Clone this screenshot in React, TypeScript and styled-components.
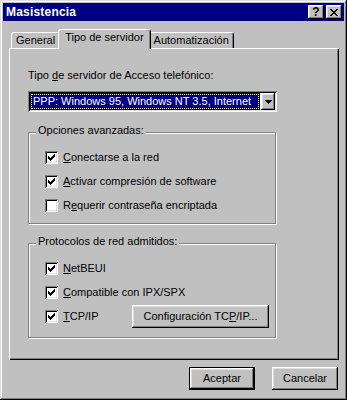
import styled, { createGlobalStyle } from 'styled-components'

const GlobalStyle = createGlobalStyle`
  html, body {
    margin: 0;
    padding: 0;
    background: #c0c0c0;
  }
  body {
    font-family: "Liberation Sans", Arial, sans-serif;
    font-size: 11px;
    color: #000;
  }
`

const raised = `
  box-shadow: inset -1px -1px #000, inset 1px 1px #fff, inset -2px -2px #808080, inset 2px 2px #dfdfdf;
`

const sunken = `
  box-shadow: inset 1px 1px #808080, inset -1px -1px #fff, inset 2px 2px #000, inset -2px -2px #dfdfdf;
`

const Window = styled.div`
  box-sizing: border-box;
  width: 347px;
  height: 400px;
  padding: 3px;
  background: #c0c0c0;
  box-shadow: inset -1px -1px #000, inset 1px 1px #dfdfdf, inset -2px -2px #808080, inset 2px 2px #fff;
  display: flex;
  flex-direction: column;
`

const TitleBar = styled.div`
  height: 18px;
  background: #000080;
  color: #fff;
  display: flex;
  align-items: center;
  padding: 0 2px 0 3px;
`

const Title = styled.span`
  font-weight: bold;
  font-size: 12px;
  letter-spacing: 0.2px;
`

const TitleButtons = styled.div`
  margin-left: auto;
  display: flex;
  gap: 2px;
`

const TitleButton = styled.div`
  width: 16px;
  height: 14px;
  background: #c0c0c0;
  color: #000;
  display: flex;
  align-items: center;
  justify-content: center;
  font-weight: bold;
  font-size: 12px;
  line-height: 14px;
  ${raised}
`

const Body = styled.div`
  flex: 1;
  display: flex;
  flex-direction: column;
  padding: 8px 5px 0 6px;
`

const TabRow = styled.div`
  position: relative;
  z-index: 1;
  height: 19px;
  display: flex;
  align-items: flex-start;
  padding-left: 2px;
`

const Tab = styled.div<{ $active?: boolean }>`
  box-sizing: border-box;
  position: relative;
  height: ${p => (p.$active ? 20 : 16)}px;
  margin-top: ${p => (p.$active ? 0 : 3)}px;
  margin-left: ${p => (p.$active ? -2 : 0)}px;
  margin-right: ${p => (p.$active ? -2 : 0)}px;
  z-index: ${p => (p.$active ? 2 : 1)};
  padding: ${p => (p.$active ? '1px 6px 0 6px' : '1px 4px 0 4px')};
  background: #c0c0c0;
  border-top: 1px solid #fff;
  border-left: 1px solid #fff;
  border-right: 1px solid #000;
  border-radius: 3px 3px 0 0;
  box-shadow: inset -1px 0 #808080;
  line-height: 13px;
  white-space: nowrap;
`

const Panel = styled.div`
  box-sizing: border-box;
  height: 312px;
  padding: 21px 0 0 19px;
  box-shadow: inset 1px 1px #fff, inset -1px -1px #000, inset -2px -2px #808080;
  display: flex;
  flex-direction: column;
  align-items: flex-start;
`

const FieldLabel = styled.div`
  line-height: 13px;
`

const Combo = styled.div`
  box-sizing: border-box;
  margin-top: 9px;
  width: 249px;
  height: 21px;
  padding: 2px;
  background: #fff;
  display: flex;
  ${sunken}
`

const ComboValue = styled.div`
  flex: 1;
  background: #000080;
  color: #fff;
  padding: 1px;
  display: flex;
`

const FocusRect = styled.div`
  flex: 1;
  border: 1px dotted #ffff90;
  padding-left: 1px;
  line-height: 13px;
  white-space: nowrap;
`

const ComboButton = styled.div`
  width: 14px;
  margin-left: 1px;
  background: #c0c0c0;
  display: flex;
  align-items: center;
  justify-content: center;
  ${raised}
`

const Group = styled.div<{ $top: number; $bottom: number }>`
  box-sizing: border-box;
  position: relative;
  width: 248px;
  margin-top: ${p => p.$top}px;
  padding: 12px 6px ${p => p.$bottom}px 16px;
  border: 1px solid #808080;
  box-shadow: inset 1px 1px #fff, 1px 1px #fff;
`

const Legend = styled.span`
  position: absolute;
  top: -9px;
  left: 7px;
  padding: 0 2px;
  background: #c0c0c0;
  line-height: 13px;
`

const Row = styled.div`
  height: 24px;
  display: flex;
  align-items: center;
`

const Box = styled.div`
  box-sizing: border-box;
  width: 13px;
  height: 13px;
  background: #fff;
  display: flex;
  align-items: center;
  justify-content: center;
  ${sunken}
`

const RowText = styled.span`
  margin-left: 5px;
  line-height: 13px;
`

const Key = styled.u`
  text-decoration: underline;
  text-underline-offset: 1px;
`

const Button = styled.div<{ $default?: boolean; $w: number }>`
  box-sizing: border-box;
  width: ${p => p.$w}px;
  height: 23px;
  display: flex;
  align-items: center;
  justify-content: center;
  background: #c0c0c0;
  line-height: 13px;
  white-space: nowrap;
  ${p =>
    p.$default
      ? `border: 1px solid #000;
         box-shadow: inset -1px -1px #000, inset 1px 1px #fff, inset -2px -2px #808080, inset 2px 2px #dfdfdf;`
      : raised}
`

const PushRight = styled.div`
  margin-left: auto;
`

const Footer = styled.div`
  display: flex;
  justify-content: flex-end;
  gap: 17px;
  margin-top: 7px;
  padding-right: 1px;
`

const CheckMark = () => (
  <svg width="7" height="7" viewBox="0 0 7 7" shapeRendering="crispEdges">
    <path
      fill="#000"
      d="M6 0h1v1h-1z M5 1h2v1h-2z M0 2h1v1h-1z M4 2h3v1h-3z M0 3h2v1h-2z M3 3h3v1h-3z M0 4h5v1h-5z M1 5h3v1h-3z M2 6h1v1h-1z"
    />
  </svg>
)

const CloseGlyph = () => (
  <svg width="8" height="7" viewBox="0 0 8 7" shapeRendering="crispEdges">
    <path
      fill="#000"
      d="M0 0h2v1h-2z M6 0h2v1h-2z M1 1h2v1h-2z M5 1h2v1h-2z M2 2h4v1h-4z M3 3h2v1h-2z M2 4h4v1h-4z M1 5h2v1h-2z M5 5h2v1h-2z M0 6h2v1h-2z M6 6h2v1h-2z"
    />
  </svg>
)

const ArrowDown = () => (
  <svg width="7" height="4" viewBox="0 0 7 4" shapeRendering="crispEdges">
    <path fill="#000" d="M0 0h7v1h-7z M1 1h5v1h-5z M2 2h3v1h-3z M3 3h1v1h-1z" />
  </svg>
)

const Check = ({ checked, children }: { checked: boolean; children: React.ReactNode }) => (
  <>
    <Box>{checked && <CheckMark />}</Box>
    <RowText>{children}</RowText>
  </>
)

export default function App() {
  return (
    <>
      <GlobalStyle />
      <Window>
        <TitleBar>
          <Title>Masistencia</Title>
          <TitleButtons>
            <TitleButton>?</TitleButton>
            <TitleButton>
              <CloseGlyph />
            </TitleButton>
          </TitleButtons>
        </TitleBar>
        <Body>
          <TabRow>
            <Tab>General</Tab>
            <Tab $active>Tipo de servidor</Tab>
            <Tab>Automatización</Tab>
          </TabRow>
          <Panel>
            <FieldLabel>
              Tipo <Key>d</Key>e servidor de Acceso telefónico:
            </FieldLabel>
            <Combo>
              <ComboValue>
                <FocusRect>PPP: Windows 95, Windows NT 3.5, Internet</FocusRect>
              </ComboValue>
              <ComboButton>
                <ArrowDown />
              </ComboButton>
            </Combo>
            <Group $top={20} $bottom={6}>
              <Legend>Opciones avanzadas:</Legend>
              <Row>
                <Check checked>
                  <Key>C</Key>onectarse a la red
                </Check>
              </Row>
              <Row>
                <Check checked>
                  <Key>A</Key>ctivar compresión de software
                </Check>
              </Row>
              <Row>
                <Check checked={false}>
                  R<Key>e</Key>querir contraseña encriptada
                </Check>
              </Row>
            </Group>
            <Group $top={19} $bottom={9}>
              <Legend>Protocolos de red admitidos:</Legend>
              <Row>
                <Check checked>
                  <Key>N</Key>etBEUI
                </Check>
              </Row>
              <Row>
                <Check checked>
                  <Key>C</Key>ompatible con IPX/SPX
                </Check>
              </Row>
              <Row>
                <Check checked>
                  <Key>T</Key>CP/IP
                </Check>
                <PushRight>
                  <Button $w={137}>
                    Configuración TC<Key>P</Key>/IP...
                  </Button>
                </PushRight>
              </Row>
            </Group>
          </Panel>
          <Footer>
            <Button $default $w={66}>
              Aceptar
            </Button>
            <Button $w={66}>Cancelar</Button>
          </Footer>
        </Body>
      </Window>
    </>
  )
}
